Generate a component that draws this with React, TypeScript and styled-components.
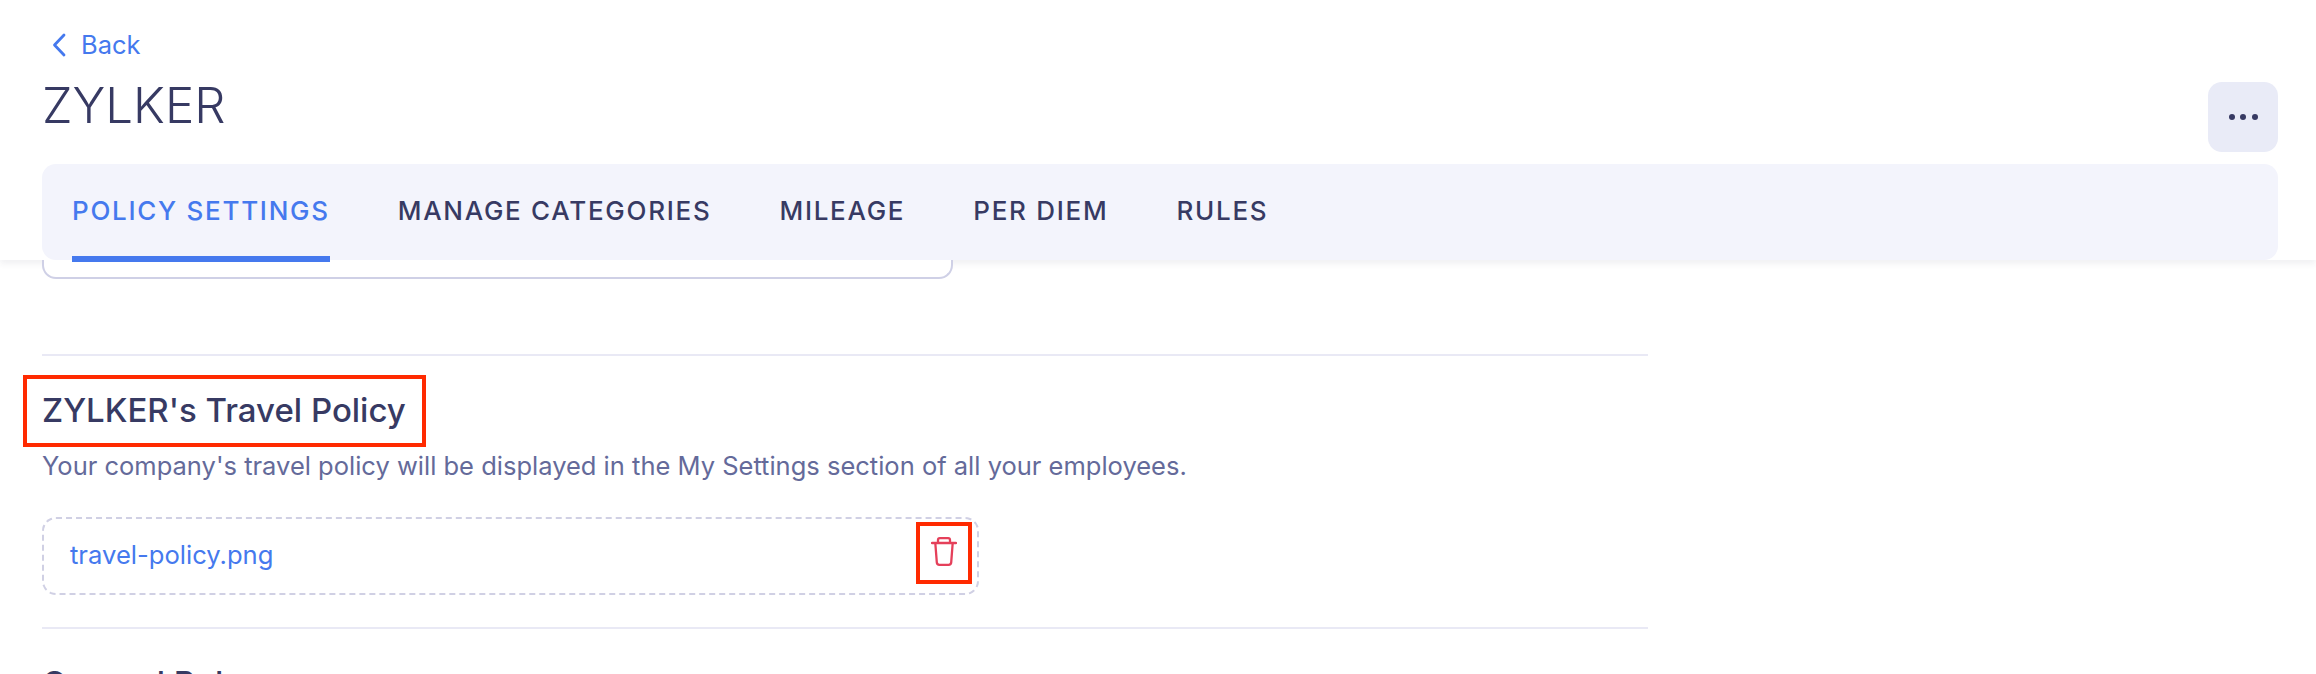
import React from "react";
import styled, { createGlobalStyle } from "styled-components";

const GlobalStyle = createGlobalStyle`
  html, body {
    margin: 0;
    height: 674px;
    overflow: hidden;
    background: #fff;
    font-family: Inter, "Noto Sans", sans-serif;
    color: #373a63;
  }
  * {
    box-sizing: border-box;
  }
`;

const tabs = ["POLICY SETTINGS", "MANAGE CATEGORIES", "MILEAGE", "PER DIEM", "RULES"];

function App() {
  return (
    <Page>
      <GlobalStyle />
      <Header>
        <TitleRow>
          <div>
            <BackLink>
              <svg width="14" height="24" viewBox="0 0 14 24" fill="none">
                <path d="M12 2 2.5 12 12 22" stroke="currentColor" strokeWidth="2.8" strokeLinecap="round" strokeLinejoin="round" />
              </svg>
              Back
            </BackLink>
            <Title>ZYLKER</Title>
          </div>
          <MoreButton aria-label="More">
            <Dot />
            <Dot />
            <Dot />
          </MoreButton>
        </TitleRow>
        <TabBar>
          {tabs.map((tab, i) => (
            <Tab key={tab} $active={i === 0}>
              {tab}
            </Tab>
          ))}
        </TabBar>
      </Header>
      <Content>
        <PreviousCard />
        <Section>
          <Divider />
          <Highlight>
            <SectionTitle>ZYLKER's Travel Policy</SectionTitle>
          </Highlight>
          <Description>Your company's travel policy will be displayed in the My Settings section of all your employees.</Description>
          <FileBox>
            <FileName>travel-policy.png</FileName>
            <DeleteFrame>
              <svg width="26" height="31" viewBox="0 0 26 31" fill="none">
                <path
                  d="M1 7h24M7 7V4c0-1 .8-1.8 1.8-1.8h8.4c1 0 1.8.8 1.8 1.8v3M4.3 7l1.5 19.4c.1 1.4 1.2 2.4 2.6 2.4h9.2c1.4 0 2.5-1 2.6-2.4L21.7 7"
                  stroke="#e5405a"
                  strokeWidth="2.3"
                  strokeLinecap="round"
                  strokeLinejoin="round"
                />
              </svg>
            </DeleteFrame>
          </FileBox>
          <Divider $gap={32} />
          <NextTitle>General Rules</NextTitle>
        </Section>
      </Content>
    </Page>
  );
}

const Page = styled.div`
  width: 2316px;
  height: 674px;
  overflow: hidden;
`;

const Header = styled.header`
  padding: 0 38px 0 42px;
  height: 260px;
  background: #fff;
  box-shadow: 0 4px 6px rgba(60, 60, 90, 0.07);
`;

const TitleRow = styled.div`
  height: 164px;
  display: flex;
  justify-content: space-between;
  padding-top: 30px;
`;

const BackLink = styled.a`
  display: flex;
  align-items: center;
  gap: 15px;
  padding-left: 10px;
  height: 30px;
  font-size: 25.5px;
  line-height: 30px;
  color: #4579ee;
`;

const Title = styled.h1`
  margin: 15px 0 0;
  font-size: 49.2px;
  line-height: 60px;
  font-weight: 300;
  color: #373a63;
`;

const MoreButton = styled.button`
  margin-top: 52px;
  width: 70px;
  height: 70px;
  border: 0;
  border-radius: 14px;
  background: #e9ebf7;
  display: flex;
  align-items: center;
  justify-content: center;
  gap: 5.5px;
`;

const Dot = styled.span`
  width: 6px;
  height: 6px;
  border-radius: 50%;
  background: #373a63;
`;

const TabBar = styled.nav`
  height: 96px;
  padding: 0 30px;
  display: flex;
  gap: 68px;
  background: #f3f4fc;
  border-radius: 14px;
`;

const Tab = styled.a<{ $active?: boolean }>`
  height: 98px;
  display: flex;
  align-items: center;
  border-bottom: 6px solid ${(p) => (p.$active ? "#4579ee" : "transparent")};
  font-size: 26px;
  font-weight: 500;
  letter-spacing: 1.72px;
  color: ${(p) => (p.$active ? "#4579ee" : "#373a63")};
`;

const Content = styled.main`
  padding-left: 42px;
`;

const PreviousCard = styled.div`
  width: 911px;
  height: 19px;
  background: #fff;
  border: 2px solid #cfd0e6;
  border-top: 0;
  border-radius: 0 0 14px 14px;
`;

const Section = styled.section`
  width: 1606px;
  padding-top: 75px;
`;

const Divider = styled.hr<{ $gap?: number }>`
  margin: ${(p) => p.$gap ?? 0}px 0 0;
  border: 0;
  height: 2px;
  background: #e9e9f5;
`;

const Highlight = styled.div`
  width: 403px;
  height: 72px;
  margin: 19px 0 0 -19px;
  padding: 0 0 2px 15px;
  display: flex;
  align-items: center;
  border: 4px solid #ff2a00;
`;

const SectionTitle = styled.h2`
  margin: 0;
  font-size: 33px;
  line-height: 40px;
  font-weight: 500;
  color: #373a63;
`;

const Description = styled.p`
  margin: 3px 0 0;
  font-size: 25.5px;
  line-height: 32px;
  color: #646a9a;
`;

const FileBox = styled.div`
  width: 937px;
  height: 78px;
  margin-top: 35px;
  padding: 0 5px 0 26px;
  display: flex;
  align-items: center;
  justify-content: space-between;
  border: 2px dashed #d0d0e4;
  border-radius: 14px;
`;

const FileName = styled.a`
  margin-bottom: 3px;
  font-size: 25.6px;
  color: #4579ee;
`;

const DeleteFrame = styled.div`
  width: 56px;
  height: 62px;
  margin-bottom: 6px;
  padding-bottom: 3px;
  display: flex;
  align-items: center;
  justify-content: center;
  border: 4px solid #ff2a00;
`;

const NextTitle = styled.h2`
  margin: 34px 0 0;
  font-size: 33px;
  line-height: 40px;
  font-weight: 500;
  color: #373a63;
`;

export default App;
